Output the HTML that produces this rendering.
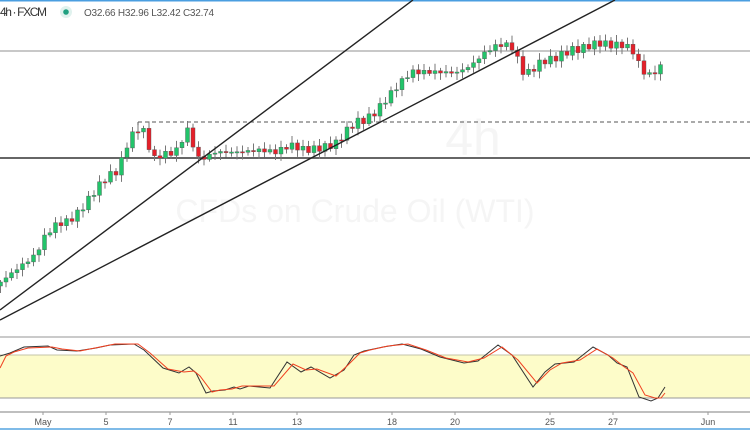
<!DOCTYPE html>
<html><head><meta charset="utf-8"><style>
html,body{margin:0;padding:0;background:#fff;width:750px;height:430px;overflow:hidden;font-family:"Liberation Sans",sans-serif}
svg{position:absolute;left:0;top:0}
</style></head><body>
<svg id="s" width="750" height="430" xmlns="http://www.w3.org/2000/svg">
<rect x="0" y="0" width="750" height="1.5" fill="#4a9ee0"/>
<text x="0" y="16" font-size="12" fill="#333" font-family="Liberation Sans,sans-serif" textLength="47">4h · FXCM</text>
<circle cx="66" cy="12" r="6" fill="#e0f2ee"/><circle cx="66" cy="12" r="2.8" fill="#20a080"/>
<text x="84" y="16" font-size="10" fill="#555" font-family="Liberation Sans,sans-serif" textLength="130">O32.66 H32.96 L32.42 C32.74</text>
<text x="473" y="155" font-size="50" fill="#f5f5f5" text-anchor="middle" font-family="Liberation Sans,sans-serif">4h</text>
<text x="355" y="222" font-size="32" fill="#f5f5f5" text-anchor="middle" font-family="Liberation Sans,sans-serif">CFDs on Crude Oil (WTI)</text>
<line x1="0" y1="51" x2="750" y2="51" stroke="#a8a8a8" stroke-width="1.3"/>
<line x1="138" y1="122" x2="750" y2="122" stroke="#555" stroke-width="1" stroke-dasharray="4,3"/>
<line x1="138" y1="122" x2="138" y2="130" stroke="#555" stroke-width="1"/>
<line x1="0" y1="158" x2="750" y2="158" stroke="#333" stroke-width="1.5"/>
<g id="c"></g>
<line x1="0" y1="310" x2="413" y2="0" stroke="#222" stroke-width="1.4"/>
<line x1="0" y1="320" x2="615" y2="0" stroke="#222" stroke-width="1.4"/>
<line x1="0" y1="337" x2="750" y2="337" stroke="#aaa" stroke-width="1.2"/>
<rect x="0" y="355" width="750" height="43" fill="#fdfcc9"/>
<line x1="0" y1="355" x2="750" y2="355" stroke="#c4c4a8" stroke-width="1"/>
<line x1="0" y1="398" x2="750" y2="398" stroke="#999" stroke-width="1"/>
<polyline fill="none" stroke="#333" stroke-width="1" points="0,356 10,353 24,347 48,346 57,350 77,351 96,348 110,345 134,344 144,350 163,368 179,373 189,367 196,373 206,393 213,391 225,390 234,387 240,389 249,386 270,388 287,362 301,372 311,367 330,378 344,370 354,355 364,351 383,347 402,344 421,349 440,357 464,363 478,361 498,345 512,355 533,387 545,372 555,364 574,362 593,347 608,355 617,363 627,367 639,397 651,401 658,398 665,387"/>
<polyline fill="none" stroke="#f04020" stroke-width="1" points="0,368 6,356 14,352 28,348 52,347 62,349 80,351 100,347 115,344 138,344 150,353 168,369 184,372 194,371 200,376 212,392 220,390 232,389 242,386 254,386 274,386 293,364 306,370 317,369 336,376 348,365 360,353 370,350 388,346 408,344 426,350 446,358 468,362 484,358 502,347 518,360 537,383 550,370 562,363 580,360 597,349 613,358 623,366 633,373 645,395 655,398 661,398 665,393"/>
<line x1="0" y1="412" x2="750" y2="412" stroke="#999" stroke-width="1.3"/>
<rect x="0" y="428" width="750" height="2" fill="#7fbbe8"/>
<g font-size="9" fill="#555" text-anchor="middle" font-family="Liberation Sans,sans-serif">
<text x="43" y="425">May</text><text x="106" y="425">5</text><text x="170" y="425">7</text><text x="233" y="425">11</text><text x="297" y="425">13</text><text x="392" y="425">18</text><text x="455" y="425">20</text><text x="550" y="425">25</text><text x="613" y="425">27</text><text x="708" y="425">Jun</text>
</g>
<g stroke="#999" stroke-width="1"><line x1="43" y1="412" x2="43" y2="415"/><line x1="106" y1="412" x2="106" y2="415"/><line x1="170" y1="412" x2="170" y2="415"/><line x1="233" y1="412" x2="233" y2="415"/><line x1="297" y1="412" x2="297" y2="415"/><line x1="392" y1="412" x2="392" y2="415"/><line x1="455" y1="412" x2="455" y2="415"/><line x1="550" y1="412" x2="550" y2="415"/><line x1="613" y1="412" x2="613" y2="415"/><line x1="708" y1="412" x2="708" y2="415"/></g>
</svg>
<script>
var k=[[0,282],[15,270],[35,255],[45,235],[55,225],[70,220],[80,210],[95,190],[105,178],[118,170],[128,140],[138,128],[145,133],[152,160],[160,155],[175,152],[188,128],[195,155],[200,160],[215,152],[240,152],[260,150],[275,152],[290,145],[305,150],[320,148],[335,144],[345,132],[355,122],[365,120],[375,112],[385,100],[395,88],[410,72],[425,72],[440,72],[455,73],[470,66],[485,52],[495,46],[505,44],[515,50],[520,72],[530,72],[540,62],[555,58],[570,50],[580,49],[590,45],[600,43],[610,45],[625,45],[630,50],[635,53],[640,70],[648,75],[655,72],[661,65],[665,63]];
function f(x){for(var i=1;i<k.length;i++){if(x<=k[i][0]){var a=k[i-1],b=k[i];return a[1]+(b[1]-a[1])*(x-a[0])/(b[0]-a[0]);}}return k[k.length-1][1];}
var g=document.getElementById('c'),h='',p=f(0)+4;
for(var x=0;x<=665;x+=5.5){var c=f(x)+Math.sin(x*1.7)*3.5;var o=p;var up=c<o;var t=Math.min(o,c),b=Math.max(o,c);if(b-t<1.2){b=t+1.2;}
var wt=t-2-Math.abs(Math.sin(x*0.9))*5,wb=b+2+Math.abs(Math.cos(x*1.3))*5;
var col=up?'#22c46a':'#e5202a';
h+='<line x1="'+(x+0.5)+'" y1="'+wt+'" x2="'+(x+0.5)+'" y2="'+wb+'" stroke="#777" stroke-width="1"/>';
h+='<rect x="'+(x-1.5)+'" y="'+t+'" width="4" height="'+(b-t)+'" fill="'+col+'" stroke="#555" stroke-width="0.4"/>';p=c;}
g.innerHTML=h;
</script>
</body></html>
